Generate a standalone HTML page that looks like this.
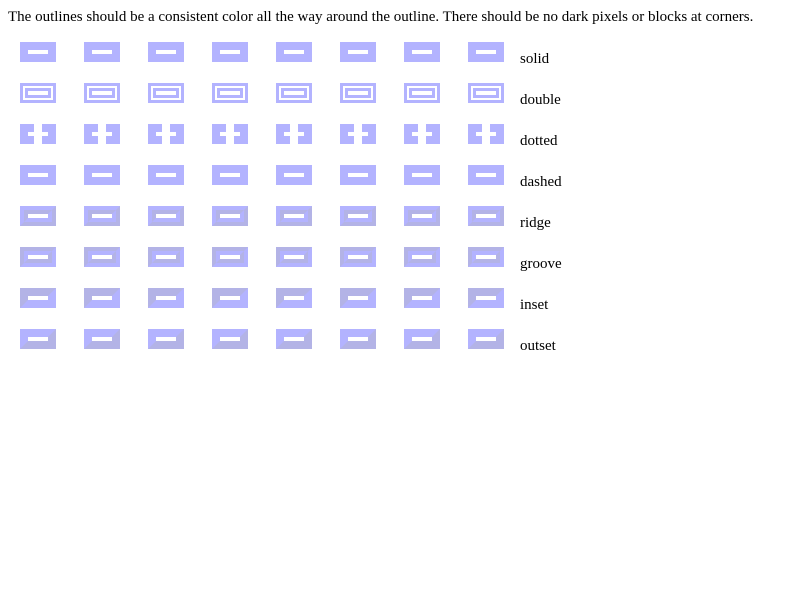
<!DOCTYPE html>
<html><head><style>
body{margin:0;background:#fff;font-family:"Liberation Serif",serif;font-size:15px;color:#000}
.h{position:absolute;left:8px;top:9px;white-space:nowrap}
.b{position:absolute;width:20px;height:4px;box-sizing:content-box}
.lab{position:absolute;left:520px}
</style></head><body>
<div class="h">The outlines should be a consistent color all the way around the outline. There should be no dark pixels or blocks at corners.</div>
<div id="c"></div>
<script>
var L='#b3b3ff',D='#b3b3e6';
var names=['solid','double','dotted','dashed','ridge','groove','inset','outset'];
var h='';
for(var r=0;r<8;r++){
 var y=42+r*41;
 for(var i=0;i<8;i++){
  var x=20+i*64;
  var n=names[r];
  var s='left:'+x+'px;top:'+y+'px;';
  if(n=='solid'||n=='dashed') h+='<div class="b" style="'+s+'border:8px solid '+L+'"></div>';
  else if(n=='double') h+='<div style="position:absolute;'+s+'width:30px;height:14px;border:3px solid '+L+'"><div style="margin:2px;width:20px;height:4px;border:3px solid '+L+'"></div></div>';
  else if(n=='dotted') h+='<div class="b" style="'+s+'border:8px solid '+L+'"></div><div style="position:absolute;left:'+(x+14)+'px;top:'+y+'px;width:8px;height:20px;background:#fff"></div>';
  else if(n=='inset'||n=='outset'){
   var a=n=='inset'?D:L,b=n=='inset'?L:D;
   h+='<div class="b" style="'+s+'border:8px solid;border-color:'+a+' '+b+' '+b+' '+a+'"></div>';
  } else {
   var a=n=='ridge'?L:D,b=n=='ridge'?D:L;
   h+='<div style="position:absolute;'+s+'width:28px;height:12px;border:4px solid;border-color:'+a+' '+b+' '+b+' '+a+'"><div style="width:20px;height:4px;border:4px solid;border-color:'+b+' '+a+' '+a+' '+b+'"></div></div>';
  }
 }
 h+='<div class="lab" style="top:'+(y+9)+'px">'+names[r]+'</div>';
}
document.getElementById('c').innerHTML=h;
</script>
</body></html>
